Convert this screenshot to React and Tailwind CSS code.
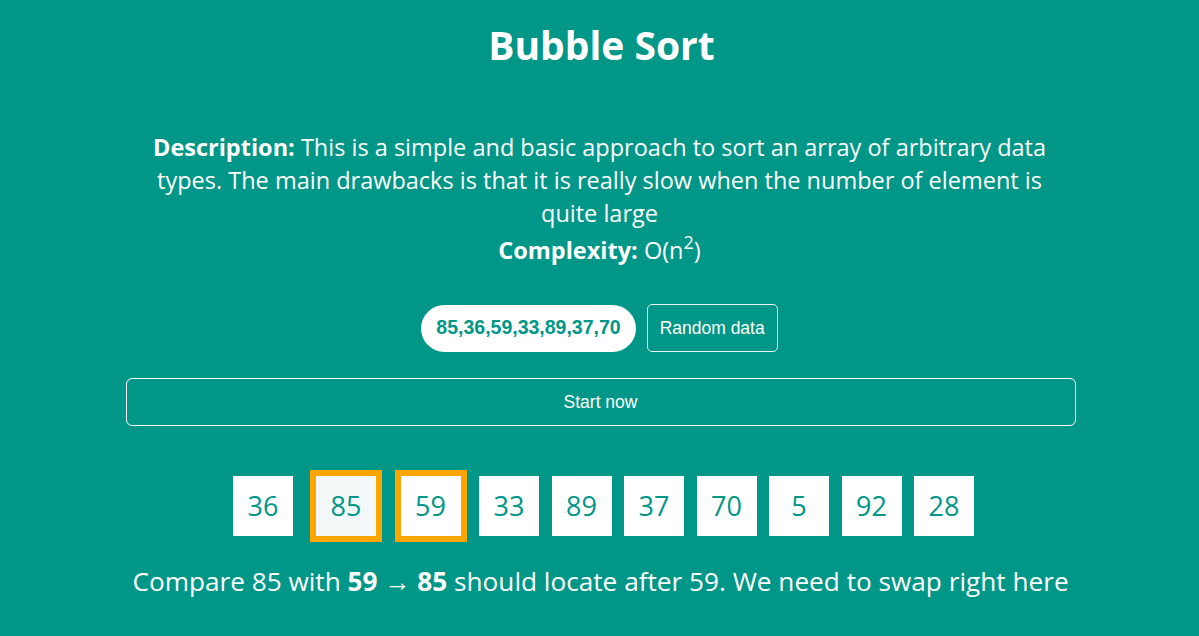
export default function App() {
  const items = [
    { v: 36 },
    { v: 85, hl: true, bg: true },
    { v: 59, hl: true },
    { v: 33 },
    { v: 89 },
    { v: 37 },
    { v: 70 },
    { v: 5 },
    { v: 92 },
    { v: 28 },
  ];
  return (
    <div className="min-h-[636px] bg-[#009688] text-white flex flex-col items-center font-['Open_Sans',sans-serif]">
      <h1 className="mt-[22px] text-[39px] font-bold leading-[46px] translate-x-[2px]">Bubble Sort</h1>
      <div className="mt-[63px] text-center text-[23.5px] leading-[33px]">
        <p className="whitespace-nowrap">
          <b>Description:</b> This is a simple and basic approach to sort an array of arbitrary data
          <br />
          types. The main drawbacks is that it is really slow when the number of element is
          <br />
          quite large
        </p>
        <p className="mt-[4px]">
          <b>Complexity:</b> O(n<sup className="text-[18px] leading-none relative top-[-10px]">2</sup>)
        </p>
      </div>
      <div className="mt-[37px] flex items-center gap-[11px] font-['Liberation_Sans',Arial,sans-serif]">
        <div className="h-[47px] px-[15px] rounded-full bg-white text-[#009688] font-bold text-[19.5px] flex items-center">
          85,36,59,33,89,37,70
        </div>
        <button className="h-[48px] w-[131px] rounded-[5px] border border-white/90 text-[17.5px] text-white">
          Random data
        </button>
      </div>
      <button className="mt-[26px] w-[950px] h-[48px] rounded-[6px] border border-white text-[17.5px] font-['Liberation_Sans',Arial,sans-serif] translate-x-[1px]">
        Start now
      </button>
      <div className="mt-[44px] h-[72px] flex items-center gap-[12.5px] pl-[8px]">
        {items.map((it, i) => (
          <div
            key={i}
            className={
              it.hl
                ? "w-[72px] h-[72px] border-[6px] border-[#ffa500] flex items-center justify-center text-[27px] text-[#009688] " +
                  (it.bg ? "bg-[#f3f8f8] ml-[4.5px]" : "bg-white")
                : "w-[60px] h-[60px] bg-white flex items-center justify-center text-[27px] text-[#009688]"
            }
          >
            {it.v}
          </div>
        ))}
      </div>
      <p className="mt-[21px] text-[26.2px] leading-[36px] translate-x-[1px] whitespace-nowrap">
        Compare 85 with <b>59</b> → <b>85</b> should locate after 59. We need to swap right here
      </p>
    </div>
  );
}
